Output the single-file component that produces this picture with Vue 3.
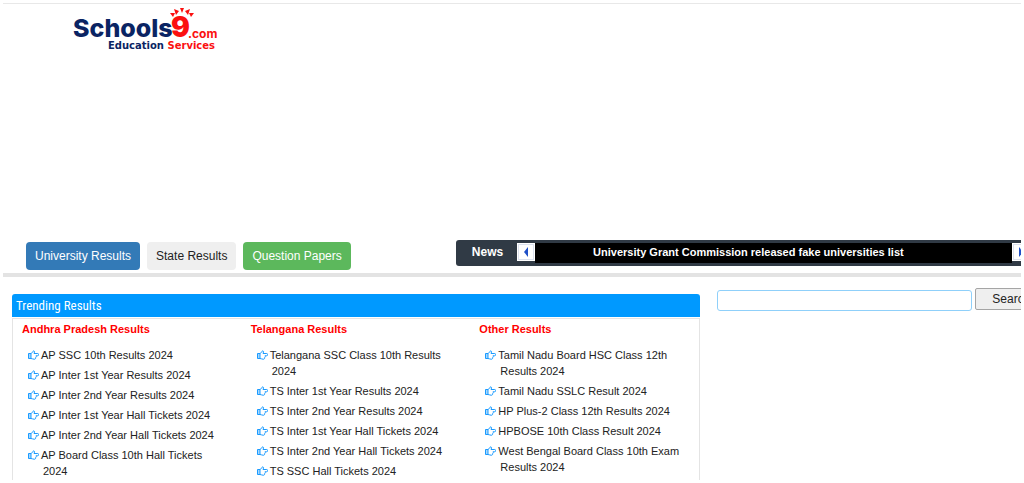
<script setup>
const columns = [
  {
    title: 'Andhra Pradesh Results',
    links: [
      'AP SSC 10th Results 2024',
      'AP Inter 1st Year Results 2024',
      'AP Inter 2nd Year Results 2024',
      'AP Inter 1st Year Hall Tickets 2024',
      'AP Inter 2nd Year Hall Tickets 2024',
      'AP Board Class 10th Hall Tickets 2024',
    ],
  },
  {
    title: 'Telangana Results',
    links: [
      'Telangana SSC Class 10th Results 2024',
      'TS Inter 1st Year Results 2024',
      'TS Inter 2nd Year Results 2024',
      'TS Inter 1st Year Hall Tickets 2024',
      'TS Inter 2nd Year Hall Tickets 2024',
      'TS SSC Hall Tickets 2024',
    ],
  },
  {
    title: 'Other Results',
    links: [
      'Tamil Nadu Board HSC Class 12th Results 2024',
      'Tamil Nadu SSLC Result 2024',
      'HP Plus-2 Class 12th Results 2024',
      'HPBOSE 10th Class Result 2024',
      'West Bengal Board Class 10th Exam Results 2024',
    ],
  },
]
</script>

<template>
  <div class="page">
    <header class="header">
      <a class="logo" href="#" aria-label="Schools9.com Education Services">
        <svg width="148" height="48" viewBox="0 0 148 48">
          <text class="word" x="1" y="33">Schools</text>
          <text class="nine" x="99" y="33">9</text>
          <text class="com" x="116" y="34">.com</text>
          <path fill="#fb1010" d="M98 9l5 0-2 4zM102 5l5 2-3 4zM108 4h4l-2 5zM113 7l5-2-2 6zM117 9h5l-3 4z" />
          <text class="tag" x="36" y="45">Education <tspan class="red">Services</tspan></text>
        </svg>
      </a>
    </header>

    <div class="bar">
      <nav class="tabs">
        <a class="tab blue" href="#">University Results</a>
        <a class="tab grey" href="#">State Results</a>
        <a class="tab green" href="#">Question Papers</a>
      </nav>
      <section class="news">
        <strong class="news-title">News</strong>
        <button class="arrow" type="button" aria-label="Previous">
          <svg width="14" height="14" viewBox="0 0 14 14"><path d="M9 2v10L5 7z" fill="#1f50c8" /></svg>
        </button>
        <a class="headline" href="#">University Grant Commission released fake universities list</a>
        <button class="arrow next" type="button" aria-label="Next">
          <svg width="14" height="14" viewBox="0 0 14 14"><path d="M5 2v10l4-5z" fill="#1f50c8" /></svg>
        </button>
      </section>
    </div>

    <main class="main">
      <section class="panel">
        <h2 class="panel-title">Trending Results</h2>
        <div class="columns">
          <div v-for="col in columns" :key="col.title" class="column">
            <h3>{{ col.title }}</h3>
            <ul>
              <li v-for="link in col.links" :key="link">
                <svg class="hand" width="11" height="10" viewBox="0 0 22 20">
                  <path d="M6 7C8 6.500 9 4 10 2.500c1.500-1.500 3.500-.5 3 1.500L12 7h7.500c2.500 0 2.500 4.500 0 4.500H16c1 1 .5 2.500-.5 3 .3 2-.5 4-3 4-2.500 0-4-1.500-6.500-1.500" fill="none" stroke="#1a9bff" stroke-width="2" stroke-linejoin="round" />
                  <path d="M1 7h5v10H1z" fill="#a6d8ff" stroke="#1a9bff" stroke-width="2" stroke-linejoin="round" />
                </svg>
                <a href="#">{{ link }}</a>
              </li>
            </ul>
          </div>
        </div>
      </section>
      <form class="search" @submit.prevent>
        <input type="text" aria-label="Search" />
        <button type="submit">Search</button>
      </form>
    </main>
  </div>
</template>

<style>
body {
  margin: 0;
  background: #fff;
}
</style>

<style scoped>
.page {
  box-sizing: border-box;
  display: flex;
  flex-direction: column;
  height: 100vh;
  border: 3px solid #fff;
  overflow: hidden;
  font-family: "Liberation Sans", Arial, sans-serif;
  font-size: 11px;
  color: #333;
}
.header {
  flex: none;
  height: 236px;
  border-top: 1px solid #e8e8e8;
}
.logo {
  display: inline-block;
  margin: 0 0 0 69px;
}
.logo svg {
  display: block;
}
.word {
  font: 800 25px Inter, sans-serif;
  fill: #0a2463;
}
.nine {
  font: 900 28px Inter, sans-serif;
  fill: #fb1010;
}
.com {
  font: 700 12px Inter, sans-serif;
  fill: #fb1010;
}
.tag {
  font: bold 10px "DejaVu Sans", sans-serif;
  fill: #0a2463;
}
.red {
  fill: #fb1010;
}
.bar {
  flex: none;
  display: flex;
  height: 33px;
  border-bottom: 4px solid #e3e3e3;
}
.tabs {
  display: flex;
  gap: 7px;
  padding: 2px 0 3px 23px;
  margin-right: 105px;
}
.tab {
  padding: 0 9px;
  border-radius: 4px;
  font-size: 12px;
  line-height: 28px;
  color: #fff;
  text-decoration: none;
  white-space: nowrap;
}
.blue {
  background: #337ab7;
}
.grey {
  background: #efefef;
  color: #222;
}
.green {
  background: #5cb85c;
}
.news {
  box-sizing: border-box;
  flex: 1;
  min-width: 0;
  display: flex;
  height: 26px;
  padding: 3px 0;
  border-radius: 3px 0 0 3px;
  background: #303a45;
  color: #fff;
  overflow: hidden;
}
.news-title {
  width: 45px;
  padding-left: 16px;
  font-size: 12px;
  line-height: 18px;
}
.arrow {
  flex: none;
  width: 18px;
  height: 18px;
  padding: 1px;
  border: 1px solid #fff;
  background: #dbe1ee;
}
.arrow svg {
  display: block;
  background: #fff;
}
.next {
  margin-right: -9px;
}
.headline {
  flex: 1;
  padding-right: 50px;
  background: #000;
  color: #fff;
  font-weight: bold;
  line-height: 19px;
  text-align: center;
  text-decoration: none;
  white-space: nowrap;
}
.main {
  flex: 1;
  min-height: 0;
  display: flex;
  gap: 17px;
}
.panel {
  flex: 688 1 0;
  display: flex;
  flex-direction: column;
  margin: 17px 0 0 9px;
}
.panel-title {
  margin: 0 0 1px;
  padding-left: 4px;
  border-radius: 3px 3px 0 0;
  background: #0099ff;
  color: #fff;
  font: 13px/23px "Roboto Condensed", Roboto, sans-serif;
}
.columns {
  flex: 1;
  display: grid;
  grid-template-columns: repeat(3, 1fr);
  border: 1px solid #e4e4e4;
  border-bottom: 0;
}
.column {
  padding: 2px 16px 0 9px;
}
h3 {
  margin: 0 0 10px;
  font-size: 11px;
  line-height: 16px;
  color: #f00;
}
ul {
  display: flex;
  flex-direction: column;
  gap: 4px;
  margin: 0;
  padding: 0 0 0 21px;
  list-style: none;
}
li {
  line-height: 16px;
  text-indent: -15px;
}
.hand {
  margin-right: 2px;
  vertical-align: -1px;
}
li a {
  color: #222;
  text-decoration: none;
}
.search {
  flex: 304 1 0;
  display: flex;
  align-items: flex-start;
  gap: 3px;
  min-width: 0;
  padding-top: 11px;
  overflow: hidden;
}
.search input {
  box-sizing: border-box;
  flex: none;
  width: 84%;
  height: 21px;
  margin: 2px 0 0;
  border: 1px solid #8fd0fa;
  border-radius: 3px;
  outline: 0;
}
.search button {
  flex: none;
  height: 22px;
  padding: 0 16px;
  border: 1px solid #a5a5a5;
  border-radius: 2px;
  background: #efefef;
  color: #222;
  font: 12px "Liberation Sans", Arial, sans-serif;
}
</style>
